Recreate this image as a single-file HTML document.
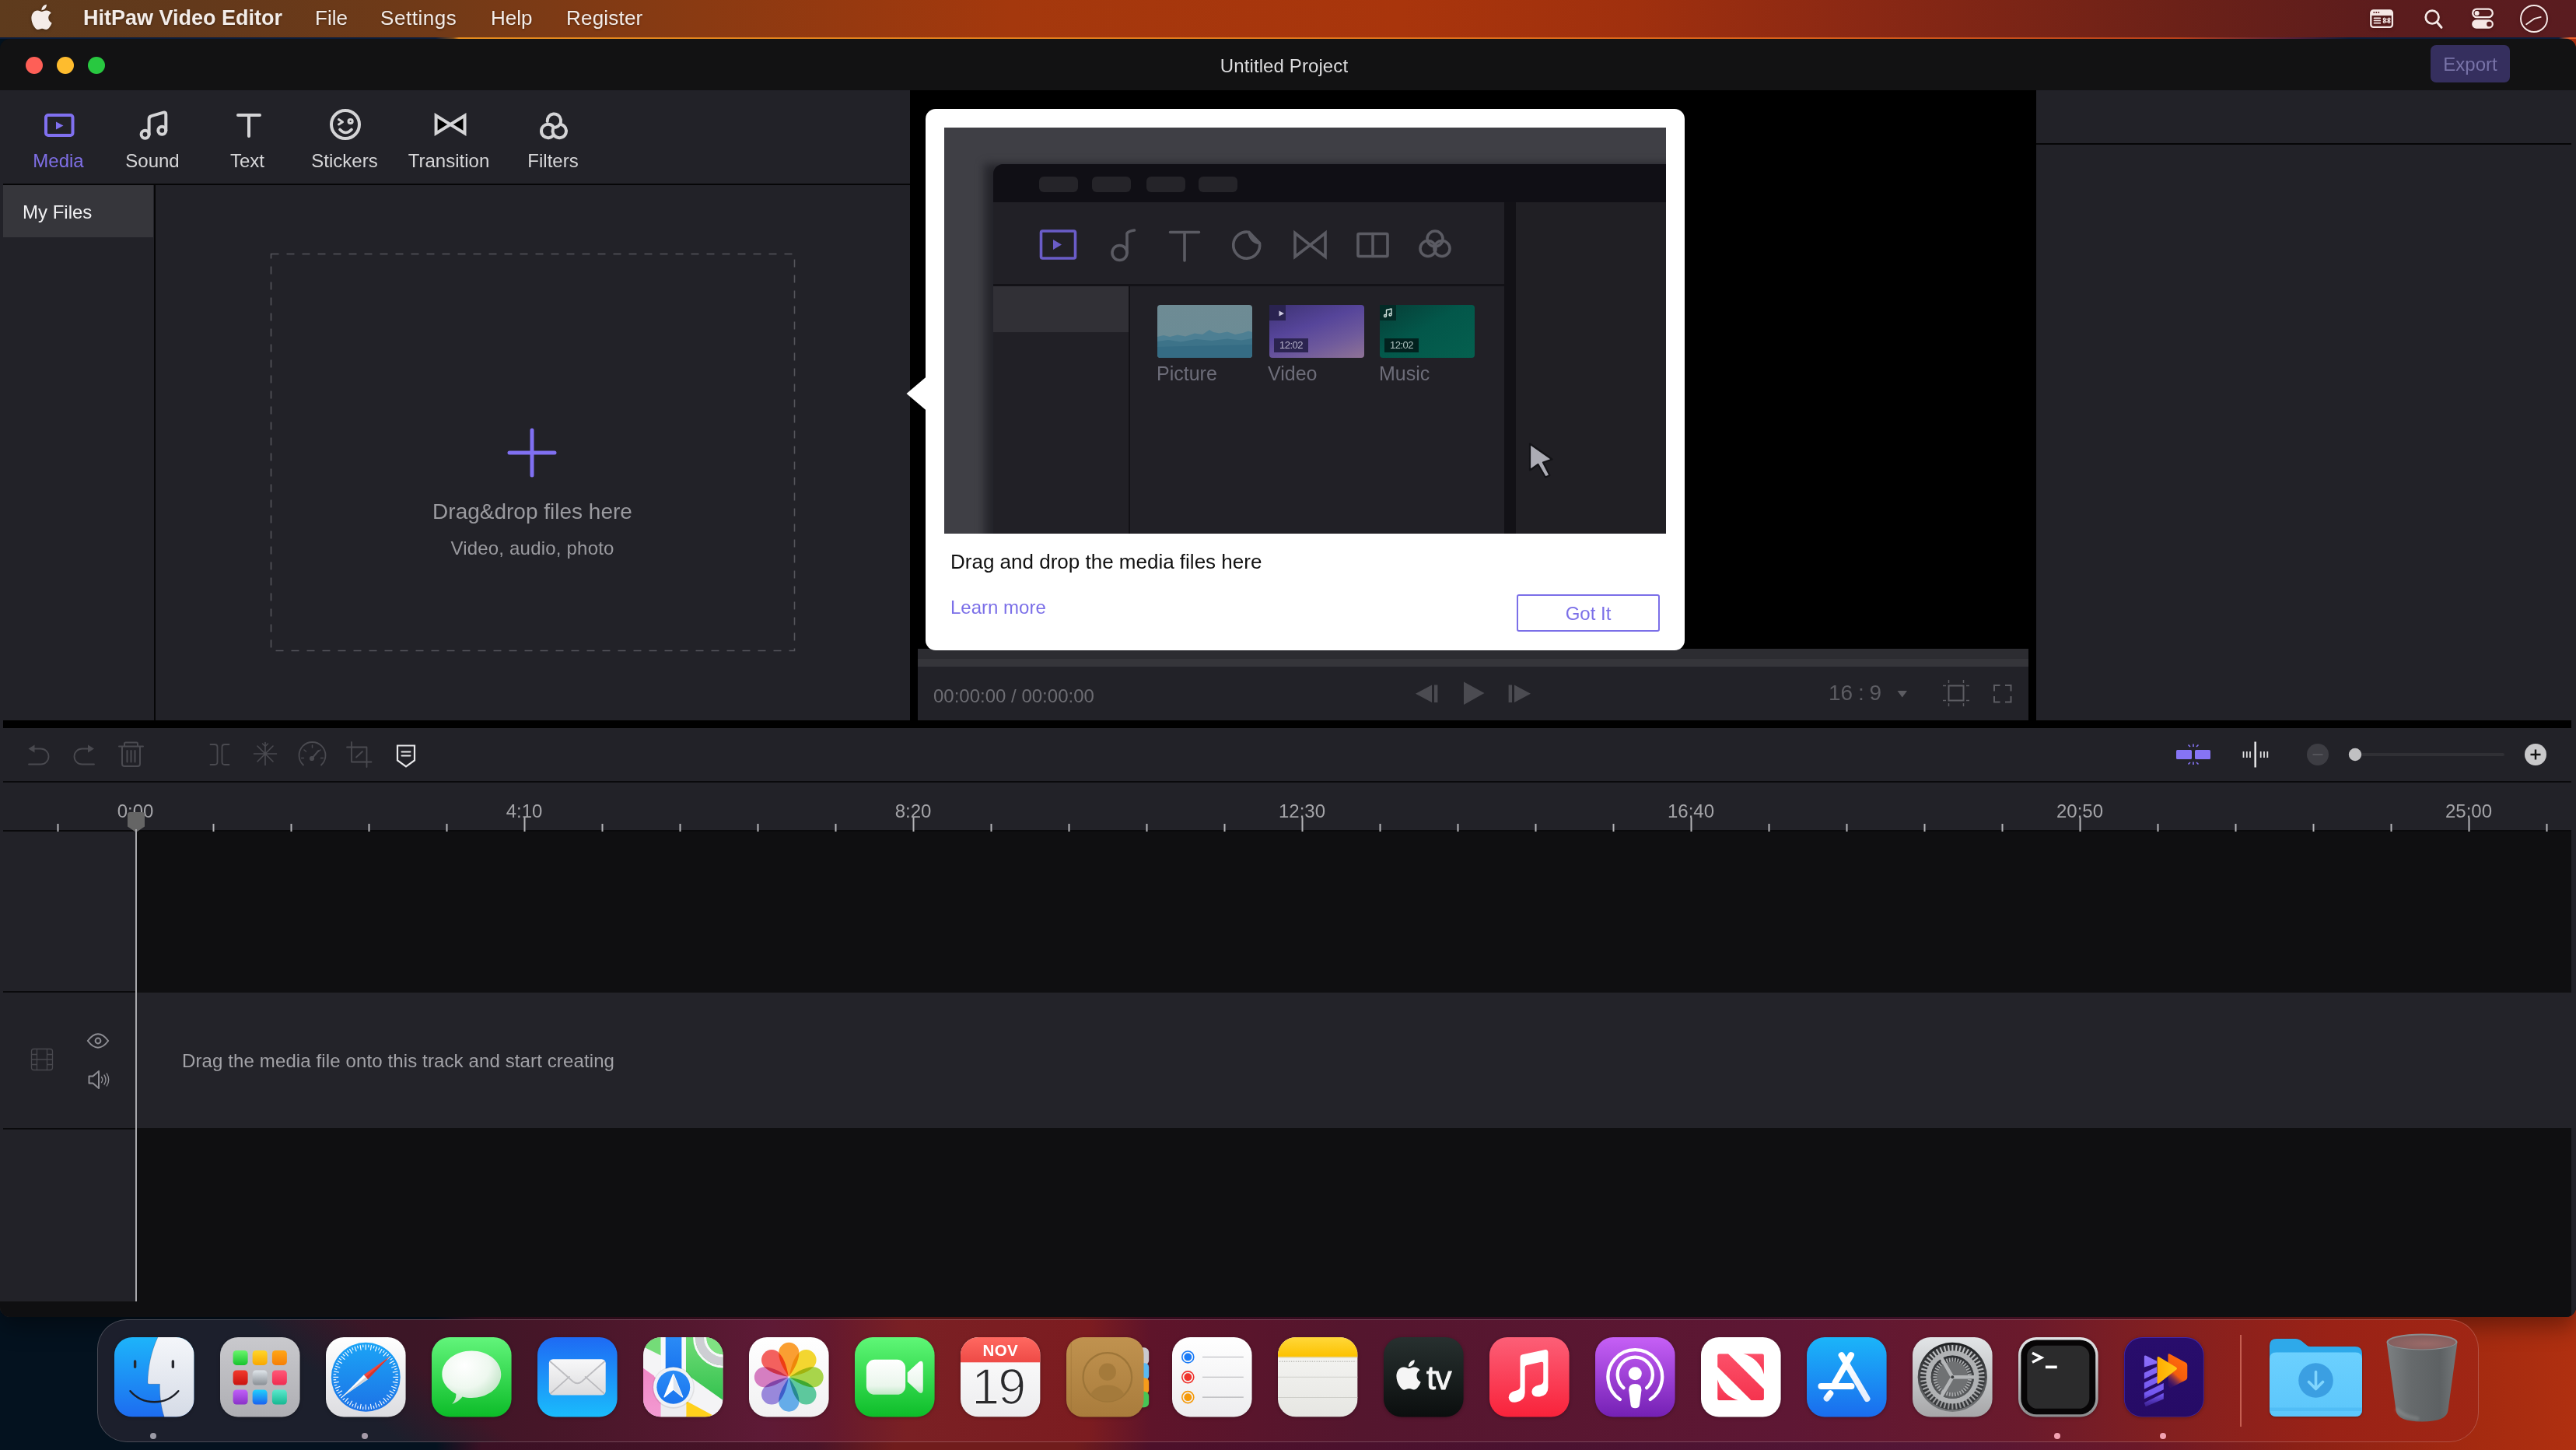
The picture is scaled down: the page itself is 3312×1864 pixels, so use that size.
<!DOCTYPE html>
<html lang="en">
<head>
<meta charset="utf-8">
<title>HitPaw Video Editor - Untitled Project</title>
<style>
*{box-sizing:border-box;margin:0;padding:0}
html,body{width:3312px;height:1864px;overflow:hidden;background:#0a1424}
body{font-family:"Liberation Sans",sans-serif;position:relative;color:#d8d8da}
.abs{position:absolute}
.tab,.rl,.mi,.tx{will-change:transform}
#desk{position:absolute;left:0;top:0;width:3312px;height:1864px;
 background:linear-gradient(90deg,#04121f 0px,#04121f 560px,#3a1024 620px,#4a1428 1050px,#701c1c 1150px,#701c1c 1380px,#4c102a 1480px,#4a1230 2000px,#541636 2500px,#6a1828 2750px,#8a2016 2950px,#a42a10 3180px,#b03010 3312px)}
/* menu bar */
#menubar{position:absolute;left:0;top:0;width:3312px;height:48px;
 background:linear-gradient(90deg,#5e3b1d 0px,#63391b 250px,#6f3a18 520px,#8a3a12 900px,#a4380d 1300px,#a9350c 1800px,#a0300e 2100px,#8a2814 2400px,#6c2118 2800px,#5b1c1d 3080px,#5a1c20 3312px)}
#menubar .mi{position:absolute;top:0;height:48px;line-height:47px;font-size:26px;color:#f3ece8;white-space:nowrap;text-shadow:0 1px 3px rgba(0,0,0,.35)}
#menuline{position:absolute;left:0;top:48px;width:3312px;height:2px;background:linear-gradient(90deg,#0b1c3a 0px,#0b1c3a 560px,#7a4a1c 583px,#e38a1e 590px,#e07a1c 1600px,#d8601a 2300px,#b8401a 2800px,#50203a 2950px,#0b1c3a 3020px,#0b1c3a 3290px,#e8602a 3304px)}
/* window */
#winshadow{position:absolute;left:0;top:50px;width:3312px;height:1643px;background:#121213;border-radius:13px;box-shadow:0 12px 30px rgba(0,0,0,.38)}
#win{position:absolute;left:0;top:0;width:3312px;height:1693px;background:#121213;clip-path:inset(50px 0 0 0 round 13px)}
#win .p{position:absolute;background:#222228}
.tl{position:absolute;top:73px;width:22px;height:22px;border-radius:50%}
.rl{position:absolute;top:1028px;font-size:24px;line-height:30px;color:#a4a4a8;transform:translateX(-50%);white-space:nowrap}
#pimg{position:absolute;left:1214px;top:164px;width:928px;height:522px;background:#3f3f45;overflow:hidden}
#pimg .pill{position:absolute;top:16px;width:50px;height:20px;border-radius:6px;background:#252429}
#pimg .th{position:absolute;top:181px;width:122px;height:68px;border-radius:4px}
#pimg .pl{position:absolute;top:253px;font-size:25px;line-height:32px;color:#6d6d79;white-space:nowrap;filter:blur(.5px)}
#dock{position:absolute;left:125px;top:1696px;width:3062px;height:157.500px;border-radius:38px;border:1.500px solid rgba(255,255,255,.2);
 background:linear-gradient(38.800deg,#1c1f2c 0,#1c1f2c 245px,rgba(28,31,44,0) 335px),linear-gradient(90deg,#3a1728 0px,#3c1626 405px,#461628 575px,#54182f 760px,#5e1a36 860px,#64192e 940px,#7a2024 1040px,#7c1c20 1275px,#5e142a 1355px,#54162e 1625px,#5e1734 2175px,#6a1a2c 2475px,#85201f 2675px,#9a2216 2875px,#a02614 3062px);background-origin:border-box}
.di{position:absolute;top:1719px;overflow:visible;filter:drop-shadow(0 1.500px 2px rgba(0,0,0,.28))}
.tab{position:absolute;top:142px;font-size:24px;color:#d6d6d8;text-align:center;white-space:nowrap;transform:translateX(-50%);line-height:30px}
</style>
</head>
<body>
<div id="desk"></div>

<!-- WINDOW -->
<div id="winshadow"></div>
<div id="win">
  <!-- title bar -->
  <div class="tl" style="left:33px;background:#fe5f57"></div>
  <div class="tl" style="left:73px;background:#febc2e"></div>
  <div class="tl" style="left:113px;background:#28c840"></div>
  <div class="abs tx" style="left:0;top:70px;width:3302px;text-align:center;font-size:24px;line-height:30px;color:#dcdcde;letter-spacing:.1px">Untitled Project</div>
  <div class="abs tx" style="left:3125px;top:58px;width:102px;height:48px;border-radius:7px;background:#352f5e;color:#7873a8;font-size:24px;line-height:50px;text-align:center">Export</div>

  <div class="p" style="left:0;top:116px;width:3312px;height:1577px"></div>
  <!-- left panel -->
  <div class="p" id="left" style="left:0;top:116px;width:1170px;height:810px"></div>
  <!-- preview black -->
  <div class="abs" style="left:1170px;top:116px;width:1448px;height:820px;background:#000"></div>
  <!-- preview controls -->
  <div class="p" id="pctl" style="left:1180px;top:834px;width:1428px;height:92px"></div>
  <!-- right panel -->
  <div class="p" id="right" style="left:2618px;top:116px;width:688px;height:810px"></div>
  <!-- black band -->
  <div class="abs" style="left:4px;top:926px;width:3302px;height:10px;background:#000"></div>
  <!-- timeline -->
  <div class="p" id="tlbar" style="left:0;top:936px;width:3306px;height:757px"></div>
<!--LEFT-->
  <div class="tab" style="left:75px;top:192px;color:#7f6fe6">Media</div>
  <div class="tab" style="left:196px;top:192px">Sound</div>
  <div class="tab" style="left:318px;top:192px">Text</div>
  <div class="tab" style="left:443px;top:192px">Stickers</div>
  <div class="tab" style="left:577px;top:192px">Transition</div>
  <div class="tab" style="left:711px;top:192px">Filters</div>
  <svg class="abs" style="left:0;top:116px" width="1170" height="120" viewBox="0 116 1170 120" fill="none" stroke="#d4d4d6" stroke-width="4" stroke-linecap="round" stroke-linejoin="round">
    <!-- media -->
    <rect x="59" y="148" width="34.5" height="26" rx="3" stroke="#8070f0"/>
    <path d="M72 156.5 L81.5 161.5 L72 166.5Z" fill="#8070f0" stroke="none"/>
    <!-- sound -->
    <circle cx="186.6" cy="172.8" r="5"/>
    <circle cx="208.3" cy="167.8" r="5"/>
    <path d="M191.6 172.8V153q0-3 3-3.8l15.500-4.600q3.200-0.800 3.200 2.600V167.800"/>
    <!-- text -->
    <path d="M306 148H334M320 148V175"/>
    <!-- stickers -->
    <circle cx="444" cy="160" r="18"/>
    <path d="M435.500 153.500L440.500 156.800L435.500 160" stroke-width="3"/>
    <circle cx="450.600" cy="156" r="2.600" stroke-width="3"/>
    <path d="M437 166.500Q444.500 174.500 452 166.500" stroke-width="3.600"/>
    <!-- transition -->
    <path d="M560.600 148.500V171.500L579 160ZM597.500 148.500V171.500L579 160Z" fill="#000" stroke-linejoin="miter" stroke-linecap="butt"/>
    <!-- filters -->
    <path d="M703.730 155.960A8.700 8.700 0 1 1 714.210 163.710"/>
    <path d="M711.360 174.040A8.700 8.700 0 1 1 711.360 162.860"/>
    <path d="M721.700 160.090A8.700 8.700 0 1 1 711.180 165.330"/>
  </svg>
  <div class="abs" style="left:4px;top:236px;width:1166px;height:2px;background:#060607"></div>
  <div class="abs" style="left:4px;top:238px;width:193px;height:67px;background:#36363b"></div>
  <div class="abs tx" style="left:28.500px;top:258px;font-size:24px;line-height:30px;color:#f0f0f2">My Files</div>
  <div class="abs" style="left:198px;top:238px;width:2px;height:688px;background:#060607"></div>
  <svg class="abs" style="left:340px;top:320px" width="690" height="524" viewBox="340 320 690 524" fill="none">
    <rect x="348.500" y="326.500" width="673" height="510" stroke="#55555b" stroke-width="1.600" stroke-dasharray="10 10"/>
    <path d="M684 553V611M655 582H713" stroke="#8070f2" stroke-width="5" stroke-linecap="round"/>
  </svg>
  <div class="abs tx" style="left:348px;top:641px;width:673px;text-align:center;font-size:28px;line-height:34px;color:#9a9a9f">Drag&amp;drop files here</div>
  <div class="abs tx" style="left:348px;top:690px;width:673px;text-align:center;font-size:24px;line-height:30px;color:#9a9a9f;letter-spacing:.2px">Video, audio, photo</div>
<!--PREVIEW-->
  <div class="abs" style="left:1180px;top:834px;width:1428px;height:13px;background:#2c2c31"></div>
  <div class="abs" style="left:1180px;top:847px;width:1428px;height:10px;background:#35353a"></div>
  <div class="abs tx" style="left:1200px;top:880px;font-size:24px;line-height:30px;color:#6c6c72;white-space:nowrap">00:00:00 / 00:00:00</div>
  <div class="abs tx" style="left:2351px;top:874px;font-size:28px;line-height:34px;color:#5c5c62;white-space:nowrap;word-spacing:-1px">16 : 9</div>
  <svg class="abs" style="left:1800px;top:866px" width="800" height="50" viewBox="1800 866 800 50" fill="#4b4b51">
    <path d="M1820 891.700L1841 880.500V903ZM1844 880.500h4.400V903h-4.400Z"/>
    <path d="M1882 876.500L1908.500 891L1882 906Z"/>
    <path d="M1968 891.700L1947 880.500V903ZM1944 880.500h-4.400V903h4.400Z"/>
    <path d="M2439.500 888H2452L2445.750 896.500Z" fill="#5c5c62"/>
    <g fill="none" stroke="#5c5c62" stroke-width="2">
      <rect x="2505.500" y="881.500" width="19" height="19"/>
      <path d="M2498 881.500h4M2528 881.500h4M2498 900.500h4M2528 900.500h4M2505.500 874v4M2524.500 874v4M2505.500 904v4M2524.500 904v4" stroke-width="1.500"/>
      <path d="M2564 888.500V881h7.500M2578 881h7.500v7.500M2585.500 895v7.500H2578M2571.500 902.500H2564V895"/>
    </g>
  </svg>
<!--RIGHT-->
  <div class="abs" style="left:2618px;top:184px;width:688px;height:2px;background:#060607"></div>
<!--TIMELINE-->
  <div class="abs" style="left:4px;top:1004px;width:3302px;height:2px;background:#0a0a0c"></div>
  <div class="abs" style="left:4px;top:1067px;width:3302px;height:2px;background:#0a0a0c"></div>
  <div class="abs" style="left:176px;top:1069px;width:3130px;height:624px;background:#0f0f11"></div>
  <div class="abs" style="left:176px;top:1276px;width:3136px;height:174px;background:#232329"></div>
  <div class="abs" style="left:4px;top:1274px;width:171px;height:2px;background:#0a0a0c"></div>
  <div class="abs" style="left:4px;top:1450px;width:171px;height:2px;background:#0a0a0c"></div>
  <div class="abs" style="left:0;top:1673px;width:176px;height:20px;background:#0f0f11"></div>
  <div class="rl" style="left:174px">0:00</div>
  <div class="rl" style="left:674px">4:10</div>
  <div class="rl" style="left:1174px">8:20</div>
  <div class="rl" style="left:1674px">12:30</div>
  <div class="rl" style="left:2174px">16:40</div>
  <div class="rl" style="left:2674px">20:50</div>
  <div class="rl" style="left:3174px">25:00</div>
  <div class="abs tx" style="left:234px;top:1349px;font-size:24px;line-height:30px;color:#a2a2a7;white-space:nowrap;letter-spacing:.12px">Drag the media file onto this track and start creating</div>
  <svg class="abs" style="left:0;top:1040px" width="3310" height="32" viewBox="0 1040 3310 32">
    <path d="M74.5 1059V1069M174.5 1051V1069M274.5 1059V1069M374.5 1059V1069M474.5 1059V1069M574.5 1059V1069M674.5 1051V1069M774.5 1059V1069M874.5 1059V1069M974.5 1059V1069M1074.5 1059V1069M1174.5 1051V1069M1274.5 1059V1069M1374.5 1059V1069M1474.5 1059V1069M1574.5 1059V1069M1674.5 1051V1069M1774.5 1059V1069M1874.5 1059V1069M1974.5 1059V1069M2074.5 1059V1069M2174.5 1051V1069M2274.5 1059V1069M2374.5 1059V1069M2474.5 1059V1069M2574.5 1059V1069M2674.5 1051V1069M2774.5 1059V1069M2874.5 1059V1069M2974.5 1059V1069M3074.5 1059V1069M3174.5 1051V1069M3274.5 1059V1069" stroke="#b4b4b8" stroke-width="2" fill="none"/>
    <path d="M164 1047q0-3 3-3h16q3 0 3 3v15.500l-11 7.500l-11-7.500Z" fill="#656565"/>
  </svg>
  <div class="abs" style="left:174px;top:1066px;width:2px;height:607px;background:#a8a8ac"></div>
  <!-- toolbar icons left -->
  <svg class="abs" style="left:20px;top:946px" width="540" height="48" viewBox="20 946 540 48" fill="none" stroke="#4a4a50" stroke-width="1.800" stroke-linecap="round" stroke-linejoin="round">
    <!-- undo -->
    <path d="M37 982.500H52.500a10 10 0 0 0 0-20H40"/><path d="M44.500 957.500v10l-8-5Z" fill="#4a4a50" stroke="none"/>
    <!-- redo -->
    <path d="M121 982.500H105.500a10 10 0 0 1 0-20H117"/><path d="M113 957.500v10l8-5Z" fill="#4a4a50" stroke="none"/>
    <!-- trash -->
    <path d="M153 959.500H184M160 959.500v-3.500q0-1.500 1.500-1.500h14q1.500 0 1.500 1.500v3.500M157 959.500V982q0 3 3 3h17q3 0 3-3V959.500M163.500 965v14.500M168.500 965v14.500M173.500 965v14.500" stroke-width="2"/>
    <!-- split -->
    <path d="M270.500 957H276q3.500 0 3.500 3.500v19q0 3.500-3.500 3.500H270.500M294.500 957H289q-3.500 0-3.500 3.500v19q0 3.500 3.500 3.500h5.500"/>
    <!-- freeze -->
    <path d="M341 954.500V983.500M326.500 969H355.500M331 959l20 20M351 959l-20 20" stroke-width="1.600"/>
    <path d="M337.500 956l3.500 3.500l3.500-3.500" stroke-width="1.400"/>
    <!-- speed -->
    <path d="M390 983.500A17 17 0 1 1 413 983.500"/><path d="M401.500 974.500L409.500 965" stroke-width="2"/><circle cx="401" cy="975" r="2.200" fill="#4a4a50"/>
    <path d="M401.500 958v3M391 964l2.500 2M412 964l-2.500 2M387.500 974.500h3M412.500 974.500h3" stroke-width="1.500"/>
    <!-- crop -->
    <path d="M452 954v25.500H477.500M446 960.500H471.500V986M458 973.500l8-7.500"/>
    <!-- marker -->
    <path d="M511 958.500H533V977.500L522 985.500L511 977.500Z" stroke="#e8e8ea" stroke-width="2.200" stroke-linejoin="miter"/>
    <path d="M516.500 966.500h11M516.500 971.500h11" stroke="#e8e8ea" stroke-width="2"/>
  </svg>
  <!-- toolbar icons right -->
  <svg class="abs" style="left:2780px;top:946px" width="520" height="48" viewBox="2780 946 520 48">
    <rect x="2798" y="964" width="20" height="12" rx="1.500" fill="#8674f5"/>
    <rect x="2822" y="964" width="20" height="12" rx="1.500" fill="#8674f5"/>
    <path d="M2820 956.500v3.500M2813.500 957.500l2.500 2.500M2826.500 957.500l-2.500 2.500M2820 979.500v3.500M2813.500 982.500l2.500-2.500M2826.500 982.500l-2.500-2.500" stroke="#8674f5" stroke-width="1.600" fill="none"/>
    <path d="M2899.700 953.500V986.500" stroke="#e0e0e2" stroke-width="2.600"/>
    <path d="M2884.500 966v8M2888.800 966v8M2893 966v8M2906.700 966v8M2911 966v8M2915.300 966v8" stroke="#e0e0e2" stroke-width="1.800"/>
    <circle cx="2980" cy="970" r="14" fill="#3d3d43"/>
    <path d="M2973.500 970h13" stroke="#54545a" stroke-width="2"/>
    <rect x="3028" y="968" width="192" height="4" rx="2" fill="#303035"/>
    <circle cx="3028" cy="970" r="8.200" fill="#c0c0c2"/>
    <circle cx="3260" cy="970" r="14" fill="#c8c8ca"/>
    <path d="M3253.500 970h13M3260 963.500v13" stroke="#111" stroke-width="2.400"/>
  </svg>
  <!-- track icons -->
  <svg class="abs" style="left:30px;top:1320px" width="130" height="90" viewBox="30 1320 130 90" fill="none" stroke="#8e8e94" stroke-width="2" stroke-linecap="round" stroke-linejoin="round">
    <g stroke="#48484e" stroke-width="1.300">
      <rect x="40.500" y="1348.500" width="27" height="27" rx="3"/>
      <path d="M47.500 1348.500v27M60.500 1348.500v27M40.500 1355.500h7M40.500 1362h27M40.500 1368.500h7M60.500 1355.500h7M60.500 1368.500h7"/>
    </g>
    <path d="M112.800 1338Q126 1320.500 139.200 1338Q126 1355.500 112.800 1338Z"/>
    <circle cx="126" cy="1338" r="3.400"/>
    <path d="M114.500 1383.500h5l7.500-6.500v22l-7.500-6.500h-5Z"/>
    <path d="M130.500 1384.500q2.500 3.500 0 7M134 1382q4 6 0 12M137.200 1380q5 8 0 16" stroke-width="1.400"/>
  </svg>
</div>
<!--POPUP-->
<div id="popup">
  <svg class="abs" style="left:1160px;top:480px" width="34" height="52" viewBox="1160 480 34 52"><path d="M1192 483.500L1165.500 506L1192 528.500Z" fill="#fff"/></svg>
  <div class="abs" style="left:1190px;top:140px;width:976px;height:696px;background:#fff;border-radius:13px"></div>
  <div id="pimg">
    <div class="abs" style="left:52px;top:47px;width:900px;height:520px;background:#24242a;filter:blur(6px)"></div>
    <div class="abs" style="left:63px;top:47px;width:880px;height:500px;background:#212026;border-radius:13px 0 0 0;overflow:hidden;filter:blur(.55px)">
      <div class="abs" style="left:0;top:0;width:880px;height:49px;background:#100f15"></div>
      <div class="pill" style="left:59px"></div><div class="pill" style="left:127px"></div><div class="pill" style="left:196.500px"></div><div class="pill" style="left:264px"></div>
      <div class="abs" style="left:0;top:154px;width:658px;height:3px;background:#131217"></div>
      <div class="abs" style="left:0;top:157px;width:175px;height:59px;background:#313036"></div>
      <div class="abs" style="left:174px;top:157px;width:2px;height:343px;background:#121116"></div>
      <div class="abs" style="left:657px;top:49px;width:15px;height:451px;background:#121116"></div>
      <div class="abs" style="left:672px;top:49px;width:208px;height:451px;background:#201f24"></div>
      <div class="th" style="left:211px;background:linear-gradient(180deg,#6e8b94 0%,#6a8c96 100%);overflow:hidden"><svg width="122" height="68" viewBox="0 0 122 68" style="filter:blur(.7px)"><path d="M0 41L8 39L16 41L26 38.500L36 40.500L48 36.500L58 38L67 32L72 35L80 36.500L90 34.500L100 38L110 36L117 33.500L122 35V68H0Z" fill="#4d7f93"/><path d="M0 47L14 45L30 47.500L50 44L70 46L90 43.500L108 45.500L122 43V68H0Z" fill="#3d7389"/><path d="M0 54L122 51V68H0Z" fill="#356c84"/></svg></div>
      <div class="th" style="left:354.500px;background:linear-gradient(160deg,#3d3273 0%,#56459a 40%,#6f5a9c 70%,#8f7396 100%)"></div>
      <div class="th" style="left:497px;background:linear-gradient(150deg,#063d36 0%,#03574a 45%,#05604f 100%)"></div>
      <div class="abs" style="left:354.500px;top:181px;width:21px;height:20px;background:#2a2350"></div>
      <div class="abs" style="left:497px;top:181px;width:21px;height:20px;background:#032a26"></div>
      <div class="abs tx" style="left:361px;top:224px;width:44px;height:18px;background:#2b2450;color:#b9b5cc;font-size:13px;line-height:18px;text-align:center;letter-spacing:-.5px">12:02</div>
      <div class="abs tx" style="left:503px;top:224px;width:44px;height:18px;background:#02211e;color:#b0c4c0;font-size:13px;line-height:18px;text-align:center;letter-spacing:-.5px">12:02</div>
      <div class="pl" style="left:210px">Picture</div>
      <div class="pl" style="left:353px">Video</div>
      <div class="pl" style="left:496px">Music</div>
      <svg class="abs" style="left:0;top:60px" width="660" height="190" viewBox="1277 271 660 190" fill="none" stroke="#5b5b63" stroke-width="3.600" stroke-linejoin="round" stroke-linecap="round">
        <rect x="1338.500" y="297" width="44" height="35" rx="2" stroke="#6a5cc8"/>
        <path d="M1354 308L1365 314.500L1354 321Z" fill="#6a5cc8" stroke="none"/>
        <circle cx="1439.500" cy="325" r="9.500"/><path d="M1449 325V300q2-3 9.500-4"/>
        <path d="M1504.500 298.500H1541.500M1523 298.500V335"/>
        <path d="M1606 298.500A17 17 0 1 0 1619.500 312.500Q1608 311 1606 298.500ZL1619.500 312.500"/>
        <path d="M1665 299.500V330L1684.500 315ZM1704 299.500V330L1684.500 315Z" stroke-linejoin="miter"/>
        <rect x="1746" y="300.500" width="38" height="29" rx="1.500"/><path d="M1765 300.500v29"/>
        <circle cx="1845" cy="307" r="10"/><circle cx="1836" cy="319.500" r="10"/><circle cx="1854" cy="319.500" r="10"/>
        <path d="M1644.500 399.500v7l6.500-3.500Z" fill="#cfcbe0" stroke="none"/>
        <path d="M1782.500 406v-7.500l6.500-1.500v7.500M1782.500 406a1.500 1.500 0 1 1-3 0a1.500 1.500 0 1 1 3 0M1789 404.500a1.500 1.500 0 1 1-3 0a1.500 1.500 0 1 1 3 0" stroke="#cfe0dc" stroke-width="1.400"/>
      </svg>
    </div>
    <svg class="abs" style="left:745px;top:398px" width="44" height="56" viewBox="1959 562 44 56"><path d="M1967 570.500V604.500L1977.500 597L1987 613.500L1992.500 611L1984 594.500L1995.500 590.500Z" fill="#acacb5" stroke="#131317" stroke-width="2.200" stroke-linejoin="round"/></svg>
  </div>
  <div class="abs tx" style="left:1222px;top:706px;font-size:26px;line-height:32px;color:#111;white-space:nowrap">Drag and drop the media files here</div>
  <div class="abs tx" style="left:1222px;top:765px;font-size:24px;line-height:32px;color:#7b6fe8;white-space:nowrap">Learn more</div>
  <div class="abs tx" style="left:1950px;top:764px;width:184px;height:48px;border:2px solid #7b6fe8;border-radius:3px;font-size:24px;line-height:45px;color:#7b6fe8;text-align:center">Got It</div>
</div>
<!--DOCK-->
<div id="dock"></div>
<svg class="di" style="left:146.8px" width="102.600" height="102.600" viewBox="0 0 100 100"><defs><linearGradient id="fnb" x1="0" y1="0" x2="0" y2="1"><stop offset="0" stop-color="#1db4fa"/><stop offset="1" stop-color="#1d6cf0"/></linearGradient>
<linearGradient id="fnw" x1="0" y1="0" x2="0" y2="1"><stop offset="0" stop-color="#f4f6fa"/><stop offset="1" stop-color="#d5dbe6"/></linearGradient>
<clipPath id="fnc"><rect width="100" height="100" rx="22.500"/></clipPath></defs>
<g clip-path="url(#fnc)"><rect width="100" height="100" fill="url(#fnb)"/>
<path d="M54.500 0C46 18 42.200 38 41.800 57Q41.800 58.800 43.800 58.800H57C56.500 72 58.500 88 62.600 100H100V0Z" fill="url(#fnw)"/>
<path d="M54.500 0C46 18 42.200 38 41.800 57Q41.800 58.800 43.800 58.800H57C56.500 72 58.500 88 62.600 100" fill="none" stroke="#1a2a44" stroke-opacity=".3" stroke-width=".8"/>
<rect x="24.300" y="28.500" width="3.300" height="10.400" rx="1.650" fill="#26282e"/><rect x="71.800" y="28.500" width="3.300" height="10.400" rx="1.650" fill="#26282e"/>
<path d="M20 67.500A40 40 0 0 0 80.200 67.500" fill="none" stroke="#1a1e26" stroke-width="2.500" stroke-linecap="round"/></g></svg>
<svg class="di" style="left:282.8px" width="102.600" height="102.600" viewBox="0 0 100 100"><defs><linearGradient id="lpb" x1="0" y1="0" x2="0" y2="1"><stop offset="0" stop-color="#c9c9cd"/><stop offset="1" stop-color="#aeaeb3"/></linearGradient><linearGradient id="lp00" x1="0" y1="0" x2="0" y2="1"><stop offset="0" stop-color="#6af56c"/><stop offset="1" stop-color="#18c42e"/></linearGradient><linearGradient id="lp01" x1="0" y1="0" x2="0" y2="1"><stop offset="0" stop-color="#ffd52a"/><stop offset="1" stop-color="#f9a800"/></linearGradient><linearGradient id="lp02" x1="0" y1="0" x2="0" y2="1"><stop offset="0" stop-color="#ffa616"/><stop offset="1" stop-color="#f57f06"/></linearGradient><linearGradient id="lp10" x1="0" y1="0" x2="0" y2="1"><stop offset="0" stop-color="#f23a2c"/><stop offset="1" stop-color="#c91410"/></linearGradient><linearGradient id="lp11" x1="0" y1="0" x2="0" y2="1"><stop offset="0" stop-color="#dfe5ea"/><stop offset="1" stop-color="#8a9096"/></linearGradient><linearGradient id="lp12" x1="0" y1="0" x2="0" y2="1"><stop offset="0" stop-color="#ff5878"/><stop offset="1" stop-color="#f02c50"/></linearGradient><linearGradient id="lp20" x1="0" y1="0" x2="0" y2="1"><stop offset="0" stop-color="#c060f8"/><stop offset="1" stop-color="#8a32c8"/></linearGradient><linearGradient id="lp21" x1="0" y1="0" x2="0" y2="1"><stop offset="0" stop-color="#22d0fc"/><stop offset="1" stop-color="#1a62f0"/></linearGradient><linearGradient id="lp22" x1="0" y1="0" x2="0" y2="1"><stop offset="0" stop-color="#5ce8cc"/><stop offset="1" stop-color="#16b892"/></linearGradient></defs><rect width="100" height="100" rx="22.500" fill="url(#lpb)"/><rect x="16.2" y="16.5" width="18.500" height="18.500" rx="4.300" fill="url(#lp00)"/><rect x="40.6" y="16.5" width="18.500" height="18.500" rx="4.300" fill="url(#lp01)"/><rect x="65.2" y="16.5" width="18.500" height="18.500" rx="4.300" fill="url(#lp02)"/><rect x="16.2" y="41.4" width="18.500" height="18.500" rx="4.300" fill="url(#lp10)"/><rect x="40.6" y="41.4" width="18.500" height="18.500" rx="4.300" fill="url(#lp11)"/><rect x="65.2" y="41.4" width="18.500" height="18.500" rx="4.300" fill="url(#lp12)"/><rect x="16.2" y="65.8" width="18.500" height="18.500" rx="4.300" fill="url(#lp20)"/><rect x="40.6" y="65.8" width="18.500" height="18.500" rx="4.300" fill="url(#lp21)"/><rect x="65.2" y="65.8" width="18.500" height="18.500" rx="4.300" fill="url(#lp22)"/></svg>
<svg class="di" style="left:418.8px" width="102.600" height="102.600" viewBox="0 0 100 100"><defs><linearGradient id="sfw" x1="0" y1="0" x2="0" y2="1"><stop offset="0" stop-color="#ffffff"/><stop offset="1" stop-color="#dcdce0"/></linearGradient>
<linearGradient id="sfb" x1="0" y1="0" x2="0" y2="1"><stop offset="0" stop-color="#1ba4f6"/><stop offset="1" stop-color="#1d72e6"/></linearGradient></defs>
<rect width="100" height="100" rx="22.500" fill="url(#sfw)"/><circle cx="50" cy="50" r="43.300" fill="url(#sfb)"/><path d="M50.00 15.80L50.00 9.20M53.25 12.84L53.56 9.36M55.94 16.32L57.08 9.82M59.65 13.97L60.56 10.59M61.70 17.86L63.95 11.66M65.76 16.19L67.24 13.02M67.10 20.38L70.40 14.67M71.39 19.45L73.40 16.58M71.98 23.80L76.23 18.75M76.38 23.62L78.85 21.15M76.20 28.02L81.25 23.77M80.55 28.61L83.42 26.60M79.62 32.90L85.33 29.60M83.81 34.24L86.98 32.76M82.14 38.30L88.34 36.05M86.03 40.35L89.41 39.44M83.68 44.06L90.18 42.92M87.16 46.75L90.64 46.44M84.20 50.00L90.80 50.00M87.16 53.25L90.64 53.56M83.68 55.94L90.18 57.08M86.03 59.65L89.41 60.56M82.14 61.70L88.34 63.95M83.81 65.76L86.98 67.24M79.62 67.10L85.33 70.40M80.55 71.39L83.42 73.40M76.20 71.98L81.25 76.23M76.38 76.38L78.85 78.85M71.98 76.20L76.23 81.25M71.39 80.55L73.40 83.42M67.10 79.62L70.40 85.33M65.76 83.81L67.24 86.98M61.70 82.14L63.95 88.34M59.65 86.03L60.56 89.41M55.94 83.68L57.08 90.18M53.25 87.16L53.56 90.64M50.00 84.20L50.00 90.80M46.75 87.16L46.44 90.64M44.06 83.68L42.92 90.18M40.35 86.03L39.44 89.41M38.30 82.14L36.05 88.34M34.24 83.81L32.76 86.98M32.90 79.62L29.60 85.33M28.61 80.55L26.60 83.42M28.02 76.20L23.77 81.25M23.62 76.38L21.15 78.85M23.80 71.98L18.75 76.23M19.45 71.39L16.58 73.40M20.38 67.10L14.67 70.40M16.19 65.76L13.02 67.24M17.86 61.70L11.66 63.95M13.97 59.65L10.59 60.56M16.32 55.94L9.82 57.08M12.84 53.25L9.36 53.56M15.80 50.00L9.20 50.00M12.84 46.75L9.36 46.44M16.32 44.06L9.82 42.92M13.97 40.35L10.59 39.44M17.86 38.30L11.66 36.05M16.19 34.24L13.02 32.76M20.38 32.90L14.67 29.60M19.45 28.61L16.58 26.60M23.80 28.02L18.75 23.77M23.62 23.62L21.15 21.15M28.02 23.80L23.77 18.75M28.61 19.45L26.60 16.58M32.90 20.38L29.60 14.67M34.24 16.19L32.76 13.02M38.30 17.86L36.05 11.66M40.35 13.97L39.44 10.59M44.06 16.32L42.92 9.82M46.75 12.84L46.44 9.36" stroke="#fff" stroke-width="1.150" stroke-opacity=".95" fill="none"/><path d="M80.300 24.200L47.600 47.100L52.400 52.900Z" fill="#f4493e"/><path d="M80.300 24.200L50 50L52.400 52.900Z" fill="#d5362d"/><path d="M19.300 75.600L47.600 47.100L52.400 52.900Z" fill="#fff"/><path d="M19.300 75.600L50 50L52.400 52.900Z" fill="#cfd4da"/></svg>
<svg class="di" style="left:554.8px" width="102.600" height="102.600" viewBox="0 0 100 100"><defs><linearGradient id="msg" x1="0" y1="0" x2="0" y2="1"><stop offset="0" stop-color="#62f57b"/><stop offset="1" stop-color="#0cbc28"/></linearGradient>
<radialGradient id="msw" cx=".38" cy=".28" r=".85"><stop offset="0" stop-color="#ffffff"/><stop offset=".5" stop-color="#eef8ef"/><stop offset=".8" stop-color="#c6e6cb"/><stop offset="1" stop-color="#9fd8aa"/></radialGradient></defs>
<rect width="100" height="100" rx="22.500" fill="url(#msg)"/>
<path d="M50 17C70 17 87 29.500 87 46.500S70 76 50 76C46 76 42 75.500 38.500 74.500C35 79 30 82.500 25.500 83.500C29 80 31 75 30.500 71C20.500 66 13 57 13 46.500C13 29.500 30 17 50 17Z" fill="url(#msw)"/></svg>
<svg class="di" style="left:690.8px" width="102.600" height="102.600" viewBox="0 0 100 100"><defs><linearGradient id="mlb" x1="0" y1="0" x2="0" y2="1"><stop offset="0" stop-color="#1e6af4"/><stop offset="1" stop-color="#1abcfc"/></linearGradient>
<linearGradient id="mle" x1="0" y1="0" x2="0" y2="1"><stop offset="0" stop-color="#f8f8f9"/><stop offset="1" stop-color="#dcdcde"/></linearGradient></defs>
<rect width="100" height="100" rx="22.500" fill="url(#mlb)"/>
<rect x="14.500" y="27.500" width="71" height="45" rx="5" fill="url(#mle)"/>
<path d="M16.500 70.500L40 49.500M83.500 70.500L60 49.500" stroke="#b9b9bd" stroke-width="1.600" fill="none" stroke-linecap="round"/>
<path d="M16 30.500L44.500 55.500Q50 60 55.500 55.500L84 30.500" stroke="#bdbdc1" stroke-width="1.800" fill="none" stroke-linecap="round"/></svg>
<svg class="di" style="left:826.8px" width="102.600" height="102.600" viewBox="0 0 100 100"><defs><clipPath id="mpc"><rect width="100" height="100" rx="22.500"/></clipPath>
<linearGradient id="mpg" x1="0" y1="0" x2="0" y2="1"><stop offset="0" stop-color="#6fdc76"/><stop offset="1" stop-color="#34c24f"/></linearGradient>
<linearGradient id="mpb" x1="0" y1="0" x2="0" y2="1"><stop offset="0" stop-color="#2a8bf6"/><stop offset="1" stop-color="#1a74ee"/></linearGradient>
<linearGradient id="mpp" x1="0" y1="0" x2="0" y2="1"><stop offset="0" stop-color="#ee86c4"/><stop offset="1" stop-color="#f39ad2"/></linearGradient></defs>
<g clip-path="url(#mpc)"><rect width="100" height="100" fill="#f4f4f6"/>
<path d="M0 0H22.200V22.800L0 12Z" fill="#74dc78"/>
<path d="M0 38.700L13 48L22.200 60V100H0Z" fill="url(#mpp)"/>
<path d="M53.400 0H100V79L60 50.400L53.400 45Z" fill="url(#mpg)"/>
<path d="M54 80L86.500 97.500L82 100H54Z" fill="#ffd01c"/>
<path d="M22.200 0H53.400V100H22.200Z" fill="#ececf0"/>
<path d="M22.200 0H53.400V50H22.200Z" fill="#f8f8fa"/>
<path d="M28 0H48.100V45H28Z" fill="url(#mpb)"/>
<circle cx="100.500" cy=".5" r="36.500" fill="none" stroke="#f7f7f9" stroke-width="3"/><circle cx="100.500" cy=".5" r="29.700" fill="none" stroke="#cdced3" stroke-width="10.600"/><circle cx="100.500" cy=".5" r="22.800" fill="none" stroke="#f7f7f9" stroke-width="3.400"/><circle cx="100.500" cy=".5" r="21.200" fill="#80e283"/>
<circle cx="37.800" cy="63" r="26.500" fill="#000" fill-opacity=".08"/>
<circle cx="37.800" cy="62.600" r="25.100" fill="#f0f2f6"/><circle cx="37.800" cy="62.600" r="20.900" fill="url(#mpb)"/>
<path d="M37.800 46.700L49.200 74.800L37.800 65.200L26.500 74.800Z" fill="#fff" stroke="#fff" stroke-width="1.600" stroke-linejoin="round"/><path d="M37.800 46.700L49.200 74.800L37.800 65.200Z" fill="#dde5ef"/></g></svg>
<svg class="di" style="left:962.8px" width="102.600" height="102.600" viewBox="0 0 100 100"><defs><linearGradient id="phw" x1="0" y1="0" x2="0" y2="1"><stop offset="0" stop-color="#ffffff"/><stop offset="1" stop-color="#f1f1f2"/></linearGradient></defs><rect width="100" height="100" rx="22.500" fill="url(#phw)"/><g style="isolation:isolate"><path d="M50 49.300C45.500 43 37.200 31 37.200 19.500A12.800 12.800 0 0 1 62.800 19.500C62.800 31 54.500 43 50 49.300Z" fill="#f9951c" fill-opacity=".9" style="mix-blend-mode:multiply" transform="rotate(0 50 50)"/><path d="M50 49.300C45.500 43 37.200 31 37.200 19.500A12.800 12.800 0 0 1 62.800 19.500C62.800 31 54.500 43 50 49.300Z" fill="#f2d21a" fill-opacity=".9" style="mix-blend-mode:multiply" transform="rotate(45 50 50)"/><path d="M50 49.300C45.500 43 37.200 31 37.200 19.500A12.800 12.800 0 0 1 62.800 19.500C62.800 31 54.500 43 50 49.300Z" fill="#9fd037" fill-opacity=".9" style="mix-blend-mode:multiply" transform="rotate(90 50 50)"/><path d="M50 49.300C45.500 43 37.200 31 37.200 19.500A12.800 12.800 0 0 1 62.800 19.500C62.800 31 54.500 43 50 49.300Z" fill="#4dc394" fill-opacity=".9" style="mix-blend-mode:multiply" transform="rotate(135 50 50)"/><path d="M50 49.300C45.500 43 37.200 31 37.200 19.500A12.800 12.800 0 0 1 62.800 19.500C62.800 31 54.500 43 50 49.300Z" fill="#55a4e8" fill-opacity=".9" style="mix-blend-mode:multiply" transform="rotate(180 50 50)"/><path d="M50 49.300C45.500 43 37.200 31 37.200 19.500A12.800 12.800 0 0 1 62.800 19.500C62.800 31 54.500 43 50 49.300Z" fill="#8f7cd8" fill-opacity=".9" style="mix-blend-mode:multiply" transform="rotate(225 50 50)"/><path d="M50 49.300C45.500 43 37.200 31 37.200 19.500A12.800 12.800 0 0 1 62.800 19.500C62.800 31 54.500 43 50 49.300Z" fill="#d070ba" fill-opacity=".9" style="mix-blend-mode:multiply" transform="rotate(270 50 50)"/><path d="M50 49.300C45.500 43 37.200 31 37.200 19.500A12.800 12.800 0 0 1 62.800 19.500C62.800 31 54.500 43 50 49.300Z" fill="#f2504c" fill-opacity=".9" style="mix-blend-mode:multiply" transform="rotate(315 50 50)"/></g></svg>
<svg class="di" style="left:1098.8px" width="102.600" height="102.600" viewBox="0 0 100 100"><defs><linearGradient id="ftg" x1="0" y1="0" x2="0" y2="1"><stop offset="0" stop-color="#5ff777"/><stop offset="1" stop-color="#0dbd29"/></linearGradient>
<linearGradient id="ftw" x1="0" y1="0" x2="0" y2="1"><stop offset="0" stop-color="#ffffff"/><stop offset=".75" stop-color="#eaf6ec"/><stop offset="1" stop-color="#bfe8c6"/></linearGradient></defs>
<rect width="100" height="100" rx="22.500" fill="url(#ftg)"/>
<rect x="14.500" y="28" width="49" height="44" rx="10.500" fill="url(#ftw)"/>
<path d="M66.500 44.500L80.500 31.500Q85 28.500 85 34V66Q85 71.500 80.500 68.500L66.500 55.500Z" fill="url(#ftw)" stroke="url(#ftw)" stroke-width="1" stroke-linejoin="round"/></svg>
<svg class="di" style="left:1234.8px" width="102.600" height="102.600" viewBox="0 0 100 100"><defs><linearGradient id="clw" x1="0" y1="0" x2="0" y2="1"><stop offset="0" stop-color="#ffffff"/><stop offset="1" stop-color="#ececee"/></linearGradient>
<linearGradient id="clr" x1="0" y1="0" x2="0" y2="1"><stop offset="0" stop-color="#ff6961"/><stop offset="1" stop-color="#ee4a46"/></linearGradient>
<clipPath id="clc"><rect width="100" height="100" rx="22.500"/></clipPath></defs>
<g clip-path="url(#clc)"><rect width="100" height="100" fill="url(#clw)"/><rect width="100" height="31.500" fill="url(#clr)"/></g>
<text x="50" y="23" text-anchor="middle" font-family="Liberation Sans,sans-serif" font-weight="bold" font-size="20" fill="#fff" letter-spacing=".3">NOV</text>
<text x="47" y="83.500" text-anchor="middle" font-family="Liberation Sans,sans-serif" font-size="63" fill="#2a2a2c" stroke="#f6f6f7" stroke-width="1.600" letter-spacing="-2">19</text></svg>
<svg class="di" style="left:1370.8px" width="102.600" height="102.600" viewBox="0 0 100 100"><defs><linearGradient id="ctb" x1="0" y1="0" x2="0" y2="1"><stop offset="0" stop-color="#c0924f"/><stop offset="1" stop-color="#a97c3c"/></linearGradient>
<clipPath id="ctc"><rect x="0" y="0" width="97" height="100" rx="21"/></clipPath></defs>
<rect x="86" y="13" width="17.500" height="22" rx="6" fill="#c9c9cd"/><rect x="86" y="32.500" width="17.500" height="21" rx="5" fill="#5ab9f1"/><rect x="86" y="51" width="17.500" height="20" rx="5" fill="#f59b1b"/><rect x="86" y="68" width="17.500" height="20" rx="6" fill="#46c555"/>
<rect x="0" y="0" width="97" height="100" rx="21" fill="url(#ctb)"/>
<g clip-path="url(#ctc)"><rect x="5.500" y="0" width="1.200" height="100" fill="#8f682f" fill-opacity=".3"/></g>
<circle cx="51.500" cy="50" r="30.500" fill="none" stroke="#9d7538" stroke-width="2.200"/>
<circle cx="51.500" cy="43.500" r="10.800" fill="#a47a3b"/>
<path d="M30.500 71.500C35 63 43 60 51.500 60S68 63 72.500 71.500C67 77.500 60 80.500 51.500 80.500S36 77.500 30.500 71.500Z" fill="#a47a3b"/></svg>
<svg class="di" style="left:1506.8px" width="102.600" height="102.600" viewBox="0 0 100 100"><defs><linearGradient id="rmw" x1="0" y1="0" x2="0" y2="1"><stop offset="0" stop-color="#ffffff"/><stop offset="1" stop-color="#ededef"/></linearGradient></defs>
<rect width="100" height="100" rx="22.500" fill="url(#rmw)"/><circle cx="19.800" cy="24.8" r="7.300" fill="none" stroke="#1a7cf7" stroke-width="1.600"/><circle cx="19.800" cy="24.8" r="4.800" fill="#1a7cf7"/><path d="M38 24.8H89.500" stroke="#b4b4b8" stroke-width="1.100"/><circle cx="19.800" cy="50" r="7.300" fill="none" stroke="#f0342c" stroke-width="1.600"/><circle cx="19.800" cy="50" r="4.800" fill="#f0342c"/><path d="M38 50H89.500" stroke="#b4b4b8" stroke-width="1.100"/><circle cx="19.800" cy="75.2" r="7.300" fill="none" stroke="#f59a0a" stroke-width="1.600"/><circle cx="19.800" cy="75.2" r="4.800" fill="#f59a0a"/><path d="M38 75.2H89.500" stroke="#b4b4b8" stroke-width="1.100"/></svg>
<svg class="di" style="left:1642.8px" width="102.600" height="102.600" viewBox="0 0 100 100"><defs><linearGradient id="ntw" x1="0" y1="0" x2="0" y2="1"><stop offset="0" stop-color="#f7f7f5"/><stop offset="1" stop-color="#e6e6e2"/></linearGradient>
<linearGradient id="nty" x1="0" y1="0" x2="0" y2="1"><stop offset="0" stop-color="#ffd83a"/><stop offset="1" stop-color="#fcc100"/></linearGradient>
<clipPath id="ntc"><rect width="100" height="100" rx="22.500"/></clipPath></defs>
<g clip-path="url(#ntc)"><rect width="100" height="100" fill="url(#ntw)"/><rect width="100" height="24.500" fill="url(#nty)"/><rect y="24.500" width="100" height="1.600" fill="#d8c78a" fill-opacity=".6"/>
<path d="M2 30.500H98" stroke="#bdbdb8" stroke-width="1.300" stroke-dasharray="1.300 1.600"/>
<path d="M0 50H100M0 75.500H100" stroke="#cfcfca" stroke-width="1"/></g></svg>
<svg class="di" style="left:1778.8px" width="102.600" height="102.600" viewBox="0 0 100 100"><defs><linearGradient id="tvb" x1="0" y1="0" x2="0" y2="1"><stop offset="0" stop-color="#27302f"/><stop offset="1" stop-color="#0b0e0e"/></linearGradient></defs>
<rect width="100" height="100" rx="22.500" fill="url(#tvb)"/>
<g transform="translate(12.500 28.500) scale(1.560)" fill="#f5f5f5"><path d="M12.152 6.896c-.948 0-2.415-1.078-3.960-1.040-2.040.027-3.910 1.183-4.961 3.014-2.117 3.675-.546 9.103 1.519 12.090 1.013 1.454 2.208 3.090 3.792 3.039 1.520-.065 2.090-.987 3.935-.987 1.831 0 2.350.987 3.960.948 1.637-.026 2.676-1.480 3.676-2.948 1.156-1.688 1.636-3.325 1.662-3.415-.039-.013-3.182-1.221-3.220-4.857-.026-3.040 2.480-4.494 2.597-4.559-1.429-2.090-3.623-2.324-4.390-2.376-2-.156-3.675 1.090-4.610 1.090zM15.530 3.830c.843-1.012 1.400-2.427 1.245-3.830-1.207.052-2.662.805-3.532 1.818-.780.896-1.454 2.338-1.273 3.714 1.338.104 2.715-.688 3.559-1.701"/></g>
<text x="69" y="65.500" text-anchor="middle" font-family="Liberation Sans,sans-serif" font-size="42" fill="#f5f5f5" stroke="#f5f5f5" stroke-width=".9" letter-spacing="-1">tv</text></svg>
<svg class="di" style="left:1914.8px" width="102.600" height="102.600" viewBox="0 0 100 100"><defs><linearGradient id="mub" x1="0" y1="0" x2="0" y2="1"><stop offset="0" stop-color="#fc5f77"/><stop offset="1" stop-color="#f9223a"/></linearGradient></defs>
<rect width="100" height="100" rx="22.500" fill="url(#mub)"/>
<path d="M38.500 25.500Q38.500 22.500 41.500 21.800L69 15.800Q73.500 15 73.500 19.500V63Q73.500 72.500 63 74.500Q53.500 75.500 53 68.500Q53 62 62 60Q67.500 59 67.500 55V33Q67.500 30.500 65 31L46.500 35Q44.500 35.500 44.500 38V69.500Q44.500 79.500 33.500 81.500Q24.500 82.500 24 75.500Q24 69 33 67Q38.500 66 38.500 62Z" fill="#fff"/></svg>
<svg class="di" style="left:2050.8px" width="102.600" height="102.600" viewBox="0 0 100 100"><defs><linearGradient id="pdb" x1="0" y1="0" x2="0" y2="1"><stop offset="0" stop-color="#c660f6"/><stop offset="1" stop-color="#7420b4"/></linearGradient></defs>
<rect width="100" height="100" rx="22.500" fill="url(#pdb)"/>
<g fill="none" stroke="#fff" stroke-linecap="round"><path d="M31 78A34 34 0 1 1 69 78" stroke-width="4.200"/><path d="M35.500 63.500A22 22 0 1 1 64.500 63.500" stroke-width="4.200"/></g>
<circle cx="50" cy="45.500" r="8.300" fill="#fff"/>
<path d="M42 66Q42 58.500 50 58.500T58 66L55.500 85Q55 89 50 89T44.500 85Z" fill="#fff"/></svg>
<svg class="di" style="left:2186.8px" width="102.600" height="102.600" viewBox="0 0 100 100"><defs><clipPath id="nwc"><rect x="20.600" y="20.800" width="58.300" height="58.300" rx="2.800"/></clipPath>
<linearGradient id="nwr" x1="0" y1="0" x2="0" y2="1"><stop offset="0" stop-color="#fc5069"/><stop offset="1" stop-color="#f5334e"/></linearGradient></defs>
<rect width="100" height="100" rx="22.500" fill="#fff"/>
<g clip-path="url(#nwc)" fill="url(#nwr)"><path d="M20.600 20.800H34L78.900 65V79.100H63L20.600 37Z"/>
<path d="M53 20.800H78.900V46.600A37.200 37.200 0 0 0 53 20.800Z"/><path d="M47 79.100H20.600V53.200A37.200 37.200 0 0 0 47 79.100Z"/></g></svg>
<svg class="di" style="left:2322.8px" width="102.600" height="102.600" viewBox="0 0 100 100"><defs><linearGradient id="asb" x1="0" y1="0" x2="0" y2="1"><stop offset="0" stop-color="#1bb5f9"/><stop offset="1" stop-color="#1a6cee"/></linearGradient>
<linearGradient id="asw" x1="0" y1="0" x2="0" y2="1"><stop offset="0" stop-color="#ffffff"/><stop offset="1" stop-color="#e4eefc"/></linearGradient></defs>
<rect width="100" height="100" rx="22.500" fill="url(#asb)"/>
<g stroke="url(#asw)" stroke-width="7.800" stroke-linecap="round" fill="none"><path d="M43.500 22.500L75.500 77"/><path d="M75.500 61.500H81.500"/><path d="M29.500 70.500L25 76.500"/>
<path d="M18 61.500H56" stroke="#fff"/><path d="M55.500 22.500L35.500 57" stroke="#fff"/></g></svg>
<svg class="di" style="left:2458.8px" width="102.600" height="102.600" viewBox="0 0 100 100"><defs><linearGradient id="stb" x1="0" y1="0" x2="0" y2="1"><stop offset="0" stop-color="#e2e5e7"/><stop offset="1" stop-color="#a6a6a8"/></linearGradient>
<linearGradient id="stg" x1="0" y1="0" x2="0" y2="1"><stop offset="0" stop-color="#1c1e20"/><stop offset="1" stop-color="#77797b"/></linearGradient>
<linearGradient id="stg2" x1="0" y1="0" x2="0" y2="1"><stop offset="0" stop-color="#2c2e31"/><stop offset="1" stop-color="#5e6062"/></linearGradient>
<linearGradient id="stl" x1="0" y1="0" x2="0" y2="1"><stop offset="0" stop-color="#c2c4c6"/><stop offset="1" stop-color="#98999b"/></linearGradient></defs>
<rect width="100" height="100" rx="22.500" fill="url(#stb)"/>
<circle cx="50" cy="50" r="43.500" fill="url(#stg)"/><circle cx="50" cy="50" r="41" fill="#36383a"/><path d="M50.00 18.00L50.00 9.70M54.18 18.27L55.26 10.04M58.28 19.09L60.43 11.07M62.25 20.44L65.42 12.77M66.00 22.29L70.15 15.10M69.48 24.61L74.53 18.03M72.63 27.37L78.50 21.50M75.39 30.52L81.97 25.47M77.71 34.00L84.90 29.85M79.56 37.75L87.23 34.58M80.91 41.72L88.93 39.57M81.73 45.82L89.96 44.74M82.00 50.00L90.30 50.00M81.73 54.18L89.96 55.26M80.91 58.28L88.93 60.43M79.56 62.25L87.23 65.42M77.71 66.00L84.90 70.15M75.39 69.48L81.97 74.53M72.63 72.63L78.50 78.50M69.48 75.39L74.53 81.97M66.00 77.71L70.15 84.90M62.25 79.56L65.42 87.23M58.28 80.91L60.43 88.93M54.18 81.73L55.26 89.96M50.00 82.00L50.00 90.30M45.82 81.73L44.74 89.96M41.72 80.91L39.57 88.93M37.75 79.56L34.58 87.23M34.00 77.71L29.85 84.90M30.52 75.39L25.47 81.97M27.37 72.63L21.50 78.50M24.61 69.48L18.03 74.53M22.29 66.00L15.10 70.15M20.44 62.25L12.77 65.42M19.09 58.28L11.07 60.43M18.27 54.18L10.04 55.26M18.00 50.00L9.70 50.00M18.27 45.82L10.04 44.74M19.09 41.72L11.07 39.57M20.44 37.75L12.77 34.58M22.29 34.00L15.10 29.85M24.61 30.52L18.03 25.47M27.37 27.37L21.50 21.50M30.52 24.61L25.47 18.03M34.00 22.29L29.85 15.10M37.75 20.44L34.58 12.77M41.72 19.09L39.57 11.07M45.82 18.27L44.74 10.04" stroke="url(#stl)" stroke-width="2.100" fill="none"/><circle cx="50" cy="50" r="30" fill="none" stroke="#b0b2b4" stroke-width="6.500"/><circle cx="50" cy="50" r="27" fill="url(#stg2)"/><path d="M50.00 31.00L50.00 25.70M52.97 31.23L53.80 26.00M55.87 31.93L57.51 26.89M58.63 33.07L61.03 28.35M61.17 34.63L64.28 30.34M63.44 36.56L67.18 32.82M65.37 38.83L69.66 35.72M66.93 41.37L71.65 38.97M68.07 44.13L73.11 42.49M68.77 47.03L74.00 46.20M69.00 50.00L74.30 50.00M68.77 52.97L74.00 53.80M68.07 55.87L73.11 57.51M66.93 58.63L71.65 61.03M65.37 61.17L69.66 64.28M63.44 63.44L67.18 67.18M61.17 65.37L64.28 69.66M58.63 66.93L61.03 71.65M55.87 68.07L57.51 73.11M52.97 68.77L53.80 74.00M50.00 69.00L50.00 74.30M47.03 68.77L46.20 74.00M44.13 68.07L42.49 73.11M41.37 66.93L38.97 71.65M38.83 65.37L35.72 69.66M36.56 63.44L32.82 67.18M34.63 61.17L30.34 64.28M33.07 58.63L28.35 61.03M31.93 55.87L26.89 57.51M31.23 52.97L26.00 53.80M31.00 50.00L25.70 50.00M31.23 47.03L26.00 46.20M31.93 44.13L26.89 42.49M33.07 41.37L28.35 38.97M34.63 38.83L30.34 35.72M36.56 36.56L32.82 32.82M38.83 34.63L35.72 30.34M41.37 33.07L38.97 28.35M44.13 31.93L42.49 26.89M47.03 31.23L46.20 26.00" stroke="#a4a6a8" stroke-width="1.900" fill="none"/><circle cx="50" cy="50" r="19.500" fill="#6f7173"/><g stroke="#b4b6b8" stroke-width="4.400" stroke-linecap="butt"><path d="M50 50L36 25.700"/><path d="M50 50L78 50"/><path d="M50 50L36 74.300"/></g><circle cx="50" cy="50" r="1.900" fill="#3a3c3e"/></svg>
<svg class="di" style="left:2594.8px" width="102.600" height="102.600" viewBox="0 0 100 100"><defs><linearGradient id="tmo" x1="0" y1="0" x2="0" y2="1"><stop offset="0" stop-color="#e2e4e6"/><stop offset="1" stop-color="#8a8b8d"/></linearGradient></defs>
<rect width="100" height="100" rx="22.500" fill="url(#tmo)"/><rect x="3.300" y="3.300" width="93.400" height="93.400" rx="19.500" fill="#070506"/>
<rect x="11" y="10.500" width="78" height="79" rx="13" fill="#2b2b2c"/>
<path d="M17.500 19.800L29 25.600L17.500 31.400" fill="none" stroke="#fff" stroke-width="3.300"/><path d="M34 37.400H48.500" stroke="#fff" stroke-width="3.600"/></svg>
<svg class="di" style="left:2730.8px" width="102.600" height="102.600" viewBox="0 0 100 100"><defs><linearGradient id="hpb" x1="0" y1="0" x2="0" y2="1"><stop offset="0" stop-color="#280d6c"/><stop offset="1" stop-color="#260b66"/></linearGradient>
<linearGradient id="hpp" gradientUnits="userSpaceOnUse" x1="0" y1="22" x2="0" y2="88"><stop offset="0" stop-color="#8d70fa"/><stop offset=".75" stop-color="#7357f0"/><stop offset="1" stop-color="#5a3cd0" stop-opacity=".35"/></linearGradient>
<linearGradient id="hpy" x1="0" y1="0" x2="1" y2="0"><stop offset="0" stop-color="#ffab00"/><stop offset="1" stop-color="#ffc916"/></linearGradient>
<linearGradient id="hpo" x1=".7" y1=".2" x2=".3" y2="1"><stop offset="0" stop-color="#ff6a0a"/><stop offset=".55" stop-color="#f35c0e"/><stop offset="1" stop-color="#7a2a60" stop-opacity=".15"/></linearGradient></defs>
<rect width="100" height="100" rx="22.500" fill="#3f27ae"/><rect x=".7" y="1" width="98.600" height="98.500" rx="22" fill="url(#hpb)"/>
<path d="M55 22.500Q55 20 57.500 21.200L77.500 32Q79.200 33 79.200 35V50.500Q79.200 52.500 77.500 53.500L58 63.500L55 60Z" fill="url(#hpo)"/>
<g fill="url(#hpp)"><path d="M25.200 24.500Q25.200 22 27.500 23.200L41 30V33L25.200 37.600Z"/><path d="M25.200 44.500L41 37V44.500L25.200 52.500Z"/><path d="M25.200 57L49.500 45V53L25.200 65Z"/><path d="M25.200 69.500L49.500 57.500V65.500L25.200 77.500Z"/><path d="M25.200 82L49.500 70V77.500L27 87Z"/></g>
<path d="M41.500 26Q41.500 23.500 43.700 24.700L65 37.500Q67.500 39.200 65 41L43.700 57.800Q41.500 59.300 41.500 56.800Z" fill="url(#hpy)"/></svg>
<div class="abs" style="left:2880px;top:1716px;width:2px;height:118px;background:#cf6a5a;opacity:.85"></div>
<svg class="abs" style="left:2918px;top:1721px;filter:drop-shadow(0 1px 1.500px rgba(0,0,0,.3))" width="119" height="100" viewBox="0 0 119 100"><defs><linearGradient id="fdf" x1="0" y1="0" x2="0" y2="1"><stop offset="0" stop-color="#6bd0fe"/><stop offset="1" stop-color="#5cc6fb"/></linearGradient></defs>
<path d="M0 9Q0 0 9 0H33Q38 0 42 3.500L48 8.500Q49.500 10 53 10H110Q119 10 119 19V91Q119 100 110 100H9Q0 100 0 91Z" fill="#2ea9ea"/>
<path d="M0 26Q0 17.500 8.500 17.500H110.500Q119 17.500 119 26V91Q119 100 110 100H9Q0 100 0 91Z" fill="url(#fdf)"/>
<rect x="0" y="88.500" width="119" height="4.500" fill="#4dbaf4" fill-opacity=".8"/>
<circle cx="59.500" cy="53.500" r="22.300" fill="#3b9fe2"/>
<path d="M59.500 42.500V63.500M50.500 55.500L59.500 64.500L68.500 55.500" fill="none" stroke="#80d5fd" stroke-width="3.600" stroke-linecap="round" stroke-linejoin="round"/></svg>
<svg class="abs" style="left:3068px;top:1714px" width="92" height="114" viewBox="0 0 92 114"><defs><linearGradient id="trb" x1="0" y1="0" x2="1" y2="0"><stop offset="0" stop-color="#7c8082"/><stop offset=".35" stop-color="#666a6c"/><stop offset=".75" stop-color="#5d6163"/><stop offset="1" stop-color="#74787a"/></linearGradient>
<radialGradient id="tri" cx=".55" cy=".6" r=".7"><stop offset="0" stop-color="#9a6a68"/><stop offset="1" stop-color="#7e5c5c"/></radialGradient></defs>
<path d="M0.500 11L12.500 99Q14 113.500 46 113.500T79.500 99L91.500 11Z" fill="url(#trb)"/>
<path d="M14 98Q22 107 40 109.500" stroke="#a8acae" stroke-opacity=".28" stroke-width="5" fill="none" stroke-linecap="round" style="filter:blur(1.500px)"/>
<ellipse cx="46" cy="11" rx="45.500" ry="10.500" fill="#8a8e90"/>
<ellipse cx="46" cy="11.500" rx="43.500" ry="9" fill="url(#tri)"/></svg>
<div class="abs" style="left:193px;top:1842px;width:8px;height:8px;border-radius:50%;background:#9a9aa6"></div>
<div class="abs" style="left:465px;top:1842px;width:8px;height:8px;border-radius:50%;background:#a59aa8"></div>
<div class="abs" style="left:2641px;top:1842px;width:8px;height:8px;border-radius:50%;background:#f3a2b2"></div>
<div class="abs" style="left:2777px;top:1842px;width:8px;height:8px;border-radius:50%;background:#f3a2b2"></div>

<!-- MENU BAR -->
<div id="menubar">
  <svg class="abs" style="left:30px;top:0;filter:drop-shadow(0 1px 2px rgba(0,0,0,.3))" width="50" height="48" viewBox="30 0 50 48"><g transform="translate(37.400 5.700) scale(1.340 1.346)" fill="#f4ece8"><path d="M12.152 6.896c-.948 0-2.415-1.078-3.960-1.040-2.040.027-3.910 1.183-4.961 3.014-2.117 3.675-.546 9.103 1.519 12.090 1.013 1.454 2.208 3.090 3.792 3.039 1.520-.065 2.090-.987 3.935-.987 1.831 0 2.350.987 3.960.948 1.637-.026 2.676-1.480 3.676-2.948 1.156-1.688 1.636-3.325 1.662-3.415-.039-.013-3.182-1.221-3.220-4.857-.026-3.040 2.480-4.494 2.597-4.559-1.429-2.090-3.623-2.324-4.390-2.376-2-.156-3.675 1.090-4.610 1.090zM15.530 3.830c.843-1.012 1.400-2.427 1.245-3.830-1.207.052-2.662.805-3.532 1.818-.780.896-1.454 2.338-1.273 3.714 1.338.104 2.715-.688 3.559-1.701"/></g></svg>
  <div class="mi" style="left:107px;font-weight:bold;font-size:27px;">HitPaw Video Editor</div>
  <div class="mi" style="left:405px">File</div>
  <div class="mi" style="left:489px;letter-spacing:.55px">Settings</div>
  <div class="mi" style="left:631px">Help</div>
  <div class="mi" style="left:727.500px;letter-spacing:.2px">Register</div>
  <svg class="abs" style="left:3030px;top:0;filter:drop-shadow(0 1px 2px rgba(0,0,0,.25))" width="282" height="48" viewBox="3030 0 282 48" fill="none" stroke="#f6e8e6" stroke-width="2.300" stroke-linecap="round" stroke-linejoin="round">
    <rect x="3048.300" y="13.300" width="27.600" height="21.600" rx="3.200"/>
    <path d="M3048.300 19.200V16.500q0-3.200 3.200-3.200h21.200q3.200 0 3.200 3.200V19.200Z" fill="#f6e8e6" stroke-width="1"/>
    <circle cx="3052.300" cy="16" r="1" fill="#5a1c1e" stroke="none"/><circle cx="3055.300" cy="16" r="1" fill="#5a1c1e" stroke="none"/><circle cx="3058.300" cy="16" r="1" fill="#5a1c1e" stroke="none"/>
    <path d="M3052.500 23.300h7.800M3052.500 26.500h7.800M3052.500 29.700h7.800" stroke-width="1.700"/>
    <path d="M3066.800 24.500h3.600v3.600h-3.600ZM3066.800 24.500a1.300 1.300 0 1 1 -1.300-1.300a1.300 1.300 0 0 1 1.300 1.300M3070.400 24.500a1.300 1.300 0 1 0 1.300-1.300a1.300 1.300 0 0 0 -1.300 1.300M3066.800 28.100a1.300 1.300 0 1 0 -1.300 1.300a1.300 1.300 0 0 0 1.300-1.300M3070.400 28.100a1.300 1.300 0 1 1 1.300 1.300a1.300 1.300 0 0 1 -1.300-1.300" stroke-width="1.200"/>
    <circle cx="3127.100" cy="22.100" r="8.400" stroke-width="2.700"/><path d="M3133.300 28.500L3139 35.300" stroke-width="3"/>
    <rect x="3179.200" y="11.600" width="25.600" height="10.600" rx="5.300" stroke-width="2.300"/><circle cx="3184.600" cy="16.900" r="3" fill="#f6e8e6" stroke="none"/>
    <rect x="3178.100" y="25.300" width="27.800" height="11.400" rx="5.700" fill="#f6e8e6" stroke="none"/><circle cx="3200.400" cy="31" r="3.300" fill="#5a1c1e" stroke="none"/>
    <circle cx="3258" cy="24" r="17" stroke-width="1.900"/><path d="M3248.200 31.300L3258.800 23.800L3266.700 21.900" stroke-width="1.900"/>
  </svg>
</div>
<div id="menuline"></div>

</body>
</html>
